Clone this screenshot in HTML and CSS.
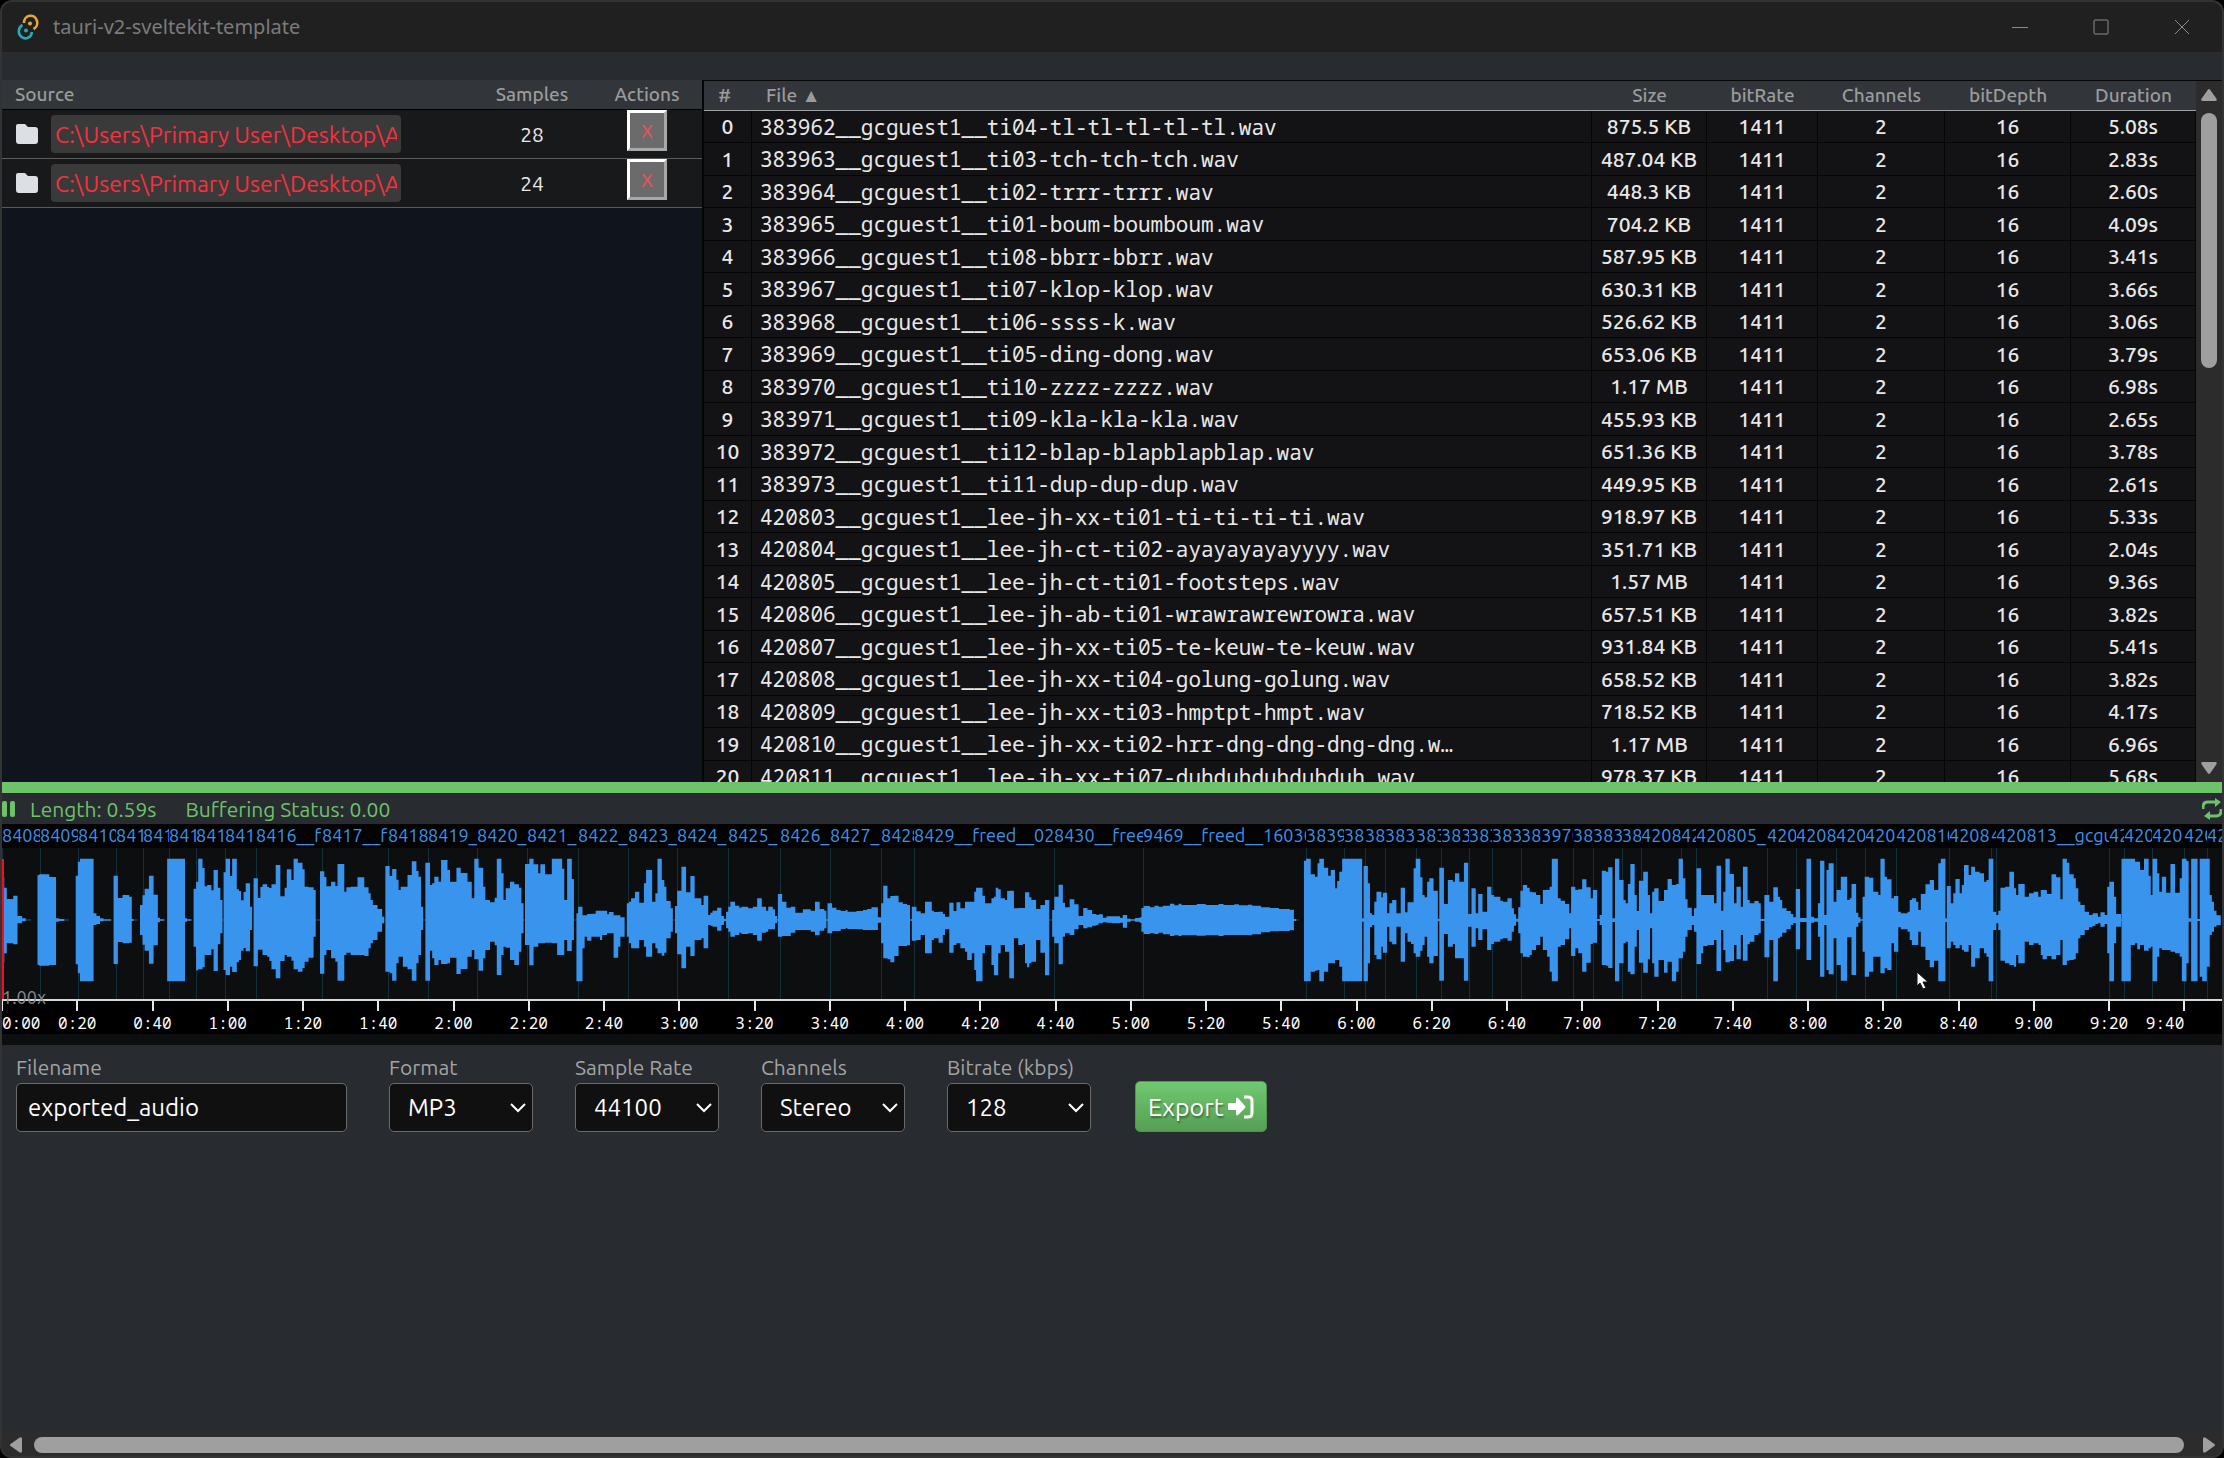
FILE: index.html
```html
<!DOCTYPE html>
<html lang="en">
<head>
<meta charset="utf-8">
<title>tauri-v2-sveltekit-template</title>
<link rel="stylesheet" href="styles.css">
</head>
<body>
<div class="window">
  <header class="titlebar">
    <svg class="logo" viewBox="0 0 24 26" aria-hidden="true">
      <g fill="none" stroke-width="2.6">
        <path d="M8 9A6.6 7 0 1 1 17.5 15" stroke="#e8a92f"/>
        <path d="M6.500 11A6.600 7 0 1 0 16 18" stroke="#25a9b5"/>
      </g>
      <circle cx="14" cy="9.500" r="2" fill="#e8a92f"/>
      <circle cx="10" cy="16.500" r="2" fill="#25a9b5"/>
    </svg>
    <h1 class="title">tauri-v2-sveltekit-template</h1>
    <div class="controls">
      <button class="control" aria-label="Minimize"><svg viewBox="0 0 16 20"><path d="M0 10.5H16"/></svg></button>
      <button class="control" aria-label="Maximize"><svg viewBox="0 0 16 20"><rect x="1" y="3" width="14" height="14" rx="1"/></svg></button>
      <button class="control" aria-label="Close"><svg viewBox="0 0 16 20"><path d="M1 3l14 14M15 3L1 17"/></svg></button>
    </div>
  </header>

  <main class="content">
    <section class="panes">
      <div class="sources">
        <table class="source-table">
          <thead><tr><th class="col-source">Source</th><th class="col-samples">Samples</th><th class="col-actions">Actions</th></tr></thead>
          <tbody>
            <tr>
              <td><div class="source"><svg class="folder" viewBox="0 0 22 20" aria-hidden="true"><path d="M2 0h7l3 3h7q3 0 3 3v11q0 3-3 3H3q-3 0-3-3V2q0-2 2-2z"/></svg><input class="path" aria-label="Source folder 1" value="C:\Users\Primary User\Desktop\A"></div></td>
              <td>28</td><td class="cell-remove"><button class="remove">X</button></td>
            </tr>
            <tr>
              <td><div class="source"><svg class="folder" viewBox="0 0 22 20" aria-hidden="true"><path d="M2 0h7l3 3h7q3 0 3 3v11q0 3-3 3H3q-3 0-3-3V2q0-2 2-2z"/></svg><input class="path" aria-label="Source folder 2" value="C:\Users\Primary User\Desktop\A"></div></td>
              <td>24</td><td class="cell-remove"><button class="remove">X</button></td>
            </tr>
          </tbody>
        </table>
      </div>
      <div class="files">
        <div class="file-scroll">
          <table class="file-table">
            <colgroup><col class="w-index"><col><col class="w-size"><col class="w-rate"><col class="w-channels"><col class="w-depth"><col class="w-duration"></colgroup>
            <thead><tr><th class="index-head">#</th><th class="name-head">File ▲</th><th>Size</th><th>bitRate</th><th>Channels</th><th>bitDepth</th><th>Duration</th></tr></thead>
            <tbody id="files"></tbody>
          </table>
        </div>
        <div class="vbar" aria-hidden="true">
          <svg class="varrow" viewBox="0 0 16 12"><path d="M8 0q1 0 2 2l5 7q2 3-1 3H2q-3 0-1-3l5-7q1-2 2-2z"/></svg>
          <div class="vtrack"><div class="vthumb"></div></div>
          <svg class="varrow" viewBox="0 0 16 12"><path d="M8 12q1 0 2-2l5-7q2-3-1-3H2q-3 0-1 3l5 7q1 2 2 2z"/></svg>
        </div>
      </div>
    </section>

    <div class="progress"></div>

    <section class="status">
      <button class="icon-button" aria-label="Pause"><svg width="14" height="16" viewBox="0 0 14 16"><rect width="5" height="16" rx="2"/><rect x="8" width="5" height="16" rx="2"/></svg></button>
      <span>Length: 0.59s</span>
      <span class="buffer">Buffering Status: 0.00</span>
      <button class="icon-button repeat" aria-label="Repeat"><svg width="20" height="22" viewBox="0 0 20 22"><path d="M1 11V9q0-5 5-5h8M19 11v2q0 5-5 5H6" fill="none" stroke="#6cc36a" stroke-width="3"/><path d="M13 0l6 4-6 5zM8 13v9l-6-4z"/></svg></button>
    </section>

    <section class="timeline">
      <div class="clips" id="clips"></div>
      <div class="wave-area">
        <svg class="wave" id="wave" viewBox="0 0 2220 151" preserveAspectRatio="none" role="img" aria-label="Waveform"></svg>
        <span class="zoom">1.00x</span>
        <svg class="pointer" width="14" height="20" viewBox="0 0 14 20" aria-hidden="true"><path d="M1 1v14l3-3 3 6 3-1-3-6h5z" fill="#fff" stroke="#111"/></svg>
      </div>
      <div class="axis" id="axis"></div>
    </section>

    <form class="export">
      <div class="field"><label for="filename">Filename</label><input class="box" id="filename" value="exported_audio"></div>
      <div class="field"><label for="format">Format</label><div class="select"><select class="box" id="format"><option>MP3</option></select><svg viewBox="0 0 16 10"><path d="M1 1l7 7 7-7"/></svg></div></div>
      <div class="field"><label for="rate">Sample Rate</label><div class="select"><select class="box" id="rate"><option>44100</option></select><svg viewBox="0 0 16 10"><path d="M1 1l7 7 7-7"/></svg></div></div>
      <div class="field"><label for="channels">Channels</label><div class="select"><select class="box" id="channels"><option>Stereo</option></select><svg viewBox="0 0 16 10"><path d="M1 1l7 7 7-7"/></svg></div></div>
      <div class="field"><label for="bitrate">Bitrate (kbps)</label><div class="select"><select class="box" id="bitrate"><option>128</option></select><svg viewBox="0 0 16 10"><path d="M1 1l7 7 7-7"/></svg></div></div>
      <button class="export-button" type="button">Export
        <svg width="27" height="24" viewBox="0 0 27 24" aria-hidden="true"><path d="M1 9q0-1 1-1h7V4q0-2 2-1l7 8q1 1 0 2l-7 7q-2 1-2-1v-4H2q-1 0-1-1z"/><path d="M17 2h4q4 0 4 4v12q0 4-4 4h-4" fill="none" stroke="#fff" stroke-width="3"/></svg>
      </button>
    </form>
  </main>

  <div class="hbar" aria-hidden="true">
    <svg class="harrow" viewBox="0 0 12 16"><path d="M0 8q0-1 2-2l7-5q3-2 3 1v12q0 3-3 1l-7-5q-2-1-2-2z"/></svg>
    <div class="hthumb"></div>
    <svg class="harrow" viewBox="0 0 12 16"><path d="M12 8q0-1-2-2L3 1Q0-1 0 2v12q0 3 3 1l7-5q2-1 2-2z"/></svg>
  </div>
</div>
<script src="script.js"></script>
</body>
</html>
```

FILE: styles.css
```css
* { box-sizing: border-box; }

body {
  margin: 0;
  height: 100vh;
  overflow: hidden;
  background: #000;
  color: #e8e8e8;
  font: 21px/24px "Ubuntu", "Noto Sans", sans-serif;
}

button, input, select { font: inherit; color: inherit; margin: 0; }
button { cursor: pointer; }

.window {
  height: 100vh;
  display: flex;
  flex-direction: column;
  border: 2px solid #333;
  border-radius: 12px;
  overflow: hidden;
  background: #282b30;
}

.titlebar {
  display: flex;
  align-items: center;
  height: 50px;
  padding: 0 0 0 14px;
  gap: 13px;
  background: #202020;
  color: #7b7b7b;
}
.logo { width: 24px; height: 26px; }
.title { margin: 0; flex: 1; font: 400 20px/24px "Noto Sans", sans-serif; }
.controls { display: flex; }
.control { width: 81px; height: 50px; padding: 0; border: 0; background: none; }
.control svg { width: 16px; height: 20px; display: block; margin: auto; fill: none; stroke: #8a8a8a; }

.content { flex: 1; min-height: 0; display: flex; flex-direction: column; padding-top: 28px; }

.panes { flex: 702 0 0; min-height: 0; display: flex; gap: 2px; background: #050506; }

.sources { flex: 700 0 0; min-width: 0; overflow: hidden; background: #10141c; }
table { width: 100%; border-collapse: separate; border-spacing: 0; table-layout: fixed; }
th, td { padding: 0; text-align: center; }
th { height: 30px; padding-bottom: 2px; background: #323539; color: #9b9b9b; font-size: 19px; line-height: 26px; font-weight: 500; }
.source-table th { border-bottom: 1px solid #000; }
.source-table td { height: 49px; border-bottom: 1px solid #5a5a5a; background: #18191b; }
.source-table .col-source { text-align: left; padding-left: 13px; }
.col-samples { width: 120px; }
.col-actions { width: 110px; }
.source { display: flex; align-items: center; gap: 13px; padding-left: 14px; }
.folder { width: 22px; height: 20px; fill: #dcdfe4; }
.path {
  width: 350px;
  height: 38px;
  padding: 0 4px;
  border: 0;
  border-radius: 4px;
  background: #3a3a3a;
  color: #fb2f3d;
  font-size: 23px;
}
.source-table .cell-remove { vertical-align: top; }
.remove {
  display: block;
  width: 40px;
  height: 41px;
  margin: 0 auto;
  padding: 0;
  border: 3px solid;
  border-color: #fff #a8a8a8 #a8a8a8 #fff;
  background: #6b6b6b;
  color: #f0525a;
  font-size: 19px;
}

.files { flex: 1518 0 0; min-width: 0; display: flex; padding-top: 1px; }
.file-scroll { flex: 1; overflow: hidden; }
.file-table th { border-bottom: 1px solid #a0a0a0; }
.file-table td {
  height: 32px;
  line-height: 31px;
  font-weight: 500;
  background: #131315;
  border-bottom: 1px solid #050506;
  border-right: 1px solid #050506;
}
.file-table tr:nth-child(even) td { height: 33px; }
.file-table .name { text-align: left; padding-left: 8px; font: 400 21px/30px "Noto Sans Mono", "DejaVu Sans Mono", monospace; overflow: hidden; white-space: nowrap; }
.file-table .name-head { text-align: left; padding-left: 14px; }
.file-table .index-head { padding-right: 7px; }
.w-index { width: 48px; }
.w-size { width: 115px; }
.w-rate { width: 111px; }
.w-channels { width: 127px; }
.w-depth { width: 126px; }
.w-duration { width: 125px; }

.vbar { width: 26px; padding: 8px 5px; display: flex; flex-direction: column; gap: 12px; background: #2c2c2c; }
.varrow { width: 16px; height: 12px; fill: #9f9f9f; flex: none; }
.vtrack { flex: 1; }
.vthumb { height: 40%; border-radius: 8px; background: #9f9f9f; }

.progress { height: 11px; background: #6cc36a; }

.status { display: flex; align-items: center; height: 31px; color: #6cc36a; }
.icon-button { padding: 0; border: 0; background: none; fill: #6cc36a; display: flex; margin-right: 14px; }
.buffer { margin-left: 29px; }
.repeat { margin: 0 0 0 auto; }

.timeline { background: #0c0e10; padding-bottom: 11px; }
.clips { display: flex; height: 24px; background: #030303; color: #3994ee; font-size: 18px; line-height: 22px; }
.clip { min-width: 0; overflow: hidden; white-space: nowrap; }
.wave-area { position: relative; height: 151px; }
.wave { display: block; width: 100%; height: 151px; }
.zoom { position: absolute; left: 0; bottom: -8px; z-index: 1; color: #8b8b8b; font-size: 18px; line-height: 20px; }
.pointer { position: absolute; left: 86.2%; top: 123px; }
.axis { display: flex; height: 35px; background: #000; border-top: 2px solid #d8d8d8; color: #fff; font: 16px/20px "Noto Sans Mono", "DejaVu Sans Mono", monospace; }
.tick { flex: 20 0 0; min-width: 0; }
.tick::before { content: ""; display: block; width: 2px; height: 10px; margin-left: -1px; background: #e8e8e8; }
.tick span { display: inline-block; transform: translateX(-50%); margin-top: 2px; }
.tick:first-child span { transform: none; }
.tick:last-child { flex-grow: 10; }
.tick:last-child span { transform: translateX(-100%); }

.export { flex: 367 0 0; display: flex; align-items: flex-start; gap: 42px; padding: 10px 14px; }
.field { display: flex; flex-direction: column; gap: 4px; width: 144px; }
.field:first-child { width: 331px; }
.field label { color: #a3a3a3; white-space: nowrap; }
.box {
  width: 100%;
  height: 49px;
  padding: 0 11px;
  border: 1px solid #6b6b6b;
  border-radius: 5px;
  background: #101010;
  color: #fff;
  font-size: 24px;
}
.select { display: grid; align-items: center; }
.select > * { grid-area: 1 / 1; }
.select .box { appearance: none; padding-left: 18px; }
.select svg { justify-self: end; width: 16px; height: 10px; margin-right: 7px; fill: none; stroke: #fff; stroke-width: 2; pointer-events: none; }
.export-button {
  display: flex;
  align-items: center;
  gap: 4px;
  height: 51px;
  margin: 26px 0 0 2px;
  padding: 0 12px;
  border: 1px solid #4f9550;
  border-radius: 5px;
  background: linear-gradient(#72c970, #559f54);
  color: #fff;
  font-size: 25px;
  text-shadow: 1px 2px 2px #0006;
}
.export-button svg { fill: #fff; }

.hbar { display: flex; align-items: center; height: 24px; padding: 2px 7px 0 8px; gap: 12px; background: #2c2c2c; }
.harrow { width: 12px; height: 16px; fill: #9f9f9f; flex: none; }
.hthumb { flex: 1; height: 16px; margin-right: 7px; border-radius: 8px; background: #9f9f9f; }
```

FILE: script.js
```js
const files = `383962__gcguest1__ti04-tl-tl-tl-tl-tl.wav|875.5 KB|5.08s
383963__gcguest1__ti03-tch-tch-tch.wav|487.04 KB|2.83s
383964__gcguest1__ti02-trrr-trrr.wav|448.3 KB|2.60s
383965__gcguest1__ti01-boum-boumboum.wav|704.2 KB|4.09s
383966__gcguest1__ti08-bbrr-bbrr.wav|587.95 KB|3.41s
383967__gcguest1__ti07-klop-klop.wav|630.31 KB|3.66s
383968__gcguest1__ti06-ssss-k.wav|526.62 KB|3.06s
383969__gcguest1__ti05-ding-dong.wav|653.06 KB|3.79s
383970__gcguest1__ti10-zzzz-zzzz.wav|1.17 MB|6.98s
383971__gcguest1__ti09-kla-kla-kla.wav|455.93 KB|2.65s
383972__gcguest1__ti12-blap-blapblapblap.wav|651.36 KB|3.78s
383973__gcguest1__ti11-dup-dup-dup.wav|449.95 KB|2.61s
420803__gcguest1__lee-jh-xx-ti01-ti-ti-ti-ti.wav|918.97 KB|5.33s
420804__gcguest1__lee-jh-ct-ti02-ayayayayayyyy.wav|351.71 KB|2.04s
420805__gcguest1__lee-jh-ct-ti01-footsteps.wav|1.57 MB|9.36s
420806__gcguest1__lee-jh-ab-ti01-wrawrawrewrowra.wav|657.51 KB|3.82s
420807__gcguest1__lee-jh-xx-ti05-te-keuw-te-keuw.wav|931.84 KB|5.41s
420808__gcguest1__lee-jh-xx-ti04-golung-golung.wav|658.52 KB|3.82s
420809__gcguest1__lee-jh-xx-ti03-hmptpt-hmpt.wav|718.52 KB|4.17s
420810__gcguest1__lee-jh-xx-ti02-hrr-dng-dng-dng-dng.w…|1.17 MB|6.96s
420811__gcguest1__lee-jh-xx-ti07-duhduhduhduhduh.wav|978.37 KB|5.68s`;

document.getElementById("files").innerHTML = files.split("\n").map((line, i) => {
  const [name, size, duration] = line.split("|");
  return `<tr><td>${i}</td><td class="name">${name}</td><td>${size}</td><td>1411</td><td>2</td><td>16</td><td>${duration}</td></tr>`;
}).join("");

// Clip start positions on the 2220-unit timeline, with the label of each clip.
const clips = [
  [0, "8408"], [38, "8409"], [76, "8410"], [114, "8411"], [141, "8412"], [167, "8413"], [194, "8414"], [223, "8415"],
  [254, "8416__fr"], [320, "8417__fr"], [386, "8418"], [426, "8419_"], [475, "8420_"], [525, "8421_"], [576, "8422_"],
  [626, "8423_"], [675, "8424_"], [726, "8425_"], [778, "8426_"], [828, "8427_"], [879, "8428"], [912, "8429__freed__020"],
  [1052, "8430__free"], [1141, "9469__freed__16030"], [1304, "3839"], [1342, "38"], [1363, "38"], [1383, "383"],
  [1414, "383"], [1439, "383"], [1467, "383"], [1490, "383"], [1519, "383970"], [1571, "38"], [1591, "383"],
  [1620, "38"], [1639, "4208"], [1679, "42"], [1694, "420805_"], [1765, "420"], [1794, "4208"], [1834, "420"],
  [1863, "420"], [1894, "420810"], [1947, "42081"], [1989, "4"], [1994, "420813__gcgu"], [2107, "42"], [2122, "420"],
  [2150, "420"], [2182, "420"], [2205, "42"]
];
document.getElementById("clips").innerHTML = clips.map(([start, name], i) => {
  const end = i + 1 < clips.length ? clips[i + 1][0] : 2220;
  return `<span class="clip" style="flex:${end - start} 0 0">${name}</span>`;
}).join("");

// Peaks as "position:up,down"; each level holds until the next position.
const peaks = [
  [0, `6:130,130 12:97,100 19:63,70 37:73,73 49:12,10 62:5,4 72:1,1 87:0,0 105:135,135 110:137,137 138:129,135 157:5,5 166:3,3 180:1,1 193:0,0
  212:133,133 218:175,160 224:184,184 262:20,15 270:12,12 280:5,4 290:2,2 311:0,0 318:133,132 330:66,66 343:75,70 362:70,68 369:3,3 374:1,1 385:0,0
  392:45,45 399:74,74 405:94,92 417:133,131 430:76,76 442:7,7 448:2,2 460:0,0 468:184,184 518:5,5 524:2,2 536:0,0
  542:94,80 549:115,151 555:184,148 567:156,142 573:101,105 580:105,105 592:89,88 598:150,153 610:97,73 617:60,40 623:1,1
  626:143,150 632:184,165 644:132,140 650:184,156 663:92,127 669:87,120 675:59,92 682:84,84 688:110,94 700:40,30 706:0,0
  710:125,139 722:66,89 729:99,89 735:107,105 748:99,110 754:96,123 760:107,148 772:165,175 785:71,123 797:97,105 803:152,110 816:120,122 822:184,148 834:172,155 847:152,144 853:100,125 864:98,113 878:90,50 884:1,1
  896:146,161 908:129,105 914:101,90 927:115,115 939:102,125 945:168,182 964:85,105 970:98,98 982:100,105 1001:128,105 1020:98,108 1032:80,85 1038:60,70 1044:45,60 1057:33,35 1070:10,10 1076:0,0
  1079:162,155 1091:132,160 1098:153,182 1110:121,130 1116:90,110 1122:100,110 1128:100,140 1141:135,148 1153:176,182 1166:147,130 1172:130,105 1179:40,30 1185:1,1
  1191:172,182 1204:105,92 1210:110,115 1216:130,135 1228:115,120 1235:180,132 1253:150,130 1260:115,113 1278:157,162 1290:141,147 1309:115,110 1321:65,90 1328:184,118 1340:157,152 1353:100,115 1359:60,90 1372:53,65 1385:67,76 1391:184,165 1404:140,105 1410:60,80 1416:95,83 1428:115,120 1440:107,135 1453:97,95 1460:50,40 1466:1,1
  1470:168,75 1482:184,136 1494:167,80 1507:140,70 1513:167,70 1526:137,68 1545:184,70 1560:184,105 1568:184,105`],
  [560, `0:184,105 6:154,105 12:60,60 20:184,93 33:123,60 39:1,1 46:20,184 51:40,184 63:14,85 69:14,50 76:18,62 88:19,50 100:28,50 112:28,60 118:28,45 132:17,40 137:24,40 150:14,113 163:14,80 169:8,50 181:0,0
  187:50,50 193:55,70 199:65,85 210:85,85 222:52,60 235:110,80 241:150,110 258:55,70 267:80,85 273:184,100 285:120,107 292:100,98 298:57,55 310:35,35 316:1,1
  322:42,40 328:88,103 340:160,145 353:83,80 365:132,108 377:65,60 396:45,55 402:73,85 415:15,15 421:22,17 427:28,20 440:37,32 452:12,15 459:4,4
  465:25,25 471:40,35 477:55,50 490:43,45 502:37,38 508:40,42 527:35,40 540:40,45 552:65,62 565:40,38 577:28,35 583:40,28 596:32,28 602:12,10 608:2,2
  610:78,50 622:55,48 634:37,48 646:40,38 659:22,30 680:32,30 702:28,35 714:55,46 727:33,32 740:28,25 746:2,2 749:50,40 762:37,33 774:30,33 786:27,27 800:30,25 805:25,27 830:27,28 848:30,30 860:33,30 872:38,30 890:8,8 899:50,70
  905:103,115 917:65,118 925:72,127 936:73,108 948:53,78 960:48,78 972:45,76 980:2,2 985:40,62 998:26,60 1010:20,45 1022:55,100 1041:28,60 1047:24,55 1060:25,68 1072:18,45 1078:10,28 1090:52,98 1102:27,75 1110:53,70 1121:35,85 1134:55,95 1140:55,120 1153:55,100 1160:85,150 1165:97,184 1183:73,100 1190:50,75 1208:65,135 1215:70,166 1220:97,166 1227:92,100 1234:65,75 1246:60,95 1252:87,95 1258:88,175 1271:35,55 1283:36,75 1296:36,72 1302:83,130 1308:83,142 1314:68,130 1320:60,125 1333:33,60 1345:45,98 1358:60,166 1370:1,1
  1378:30,50 1384:70,70 1396:106,133 1408:52,50 1414:38,40 1427:62,45 1440:47,28 1452:12,15 1465:36,25 1477:30,22 1490:18,17 1502:15,15 1508:17,10 1520:7,7 1530:11,8 1545:11,10 1568:11,10`],
  [1120, `0:7,8 8:15,23 20:4,5 30:2,2 42:6,5 55:8,8 60:36,35 66:42,42 84:38,40 96:43,42 108:40,38 120:43,43 140:49,48 152:44,46 164:49,48 172:45,46 215:48,47 240:45,46 276:48,48 290:45,45 320:47,45 333:44,45 358:46,46 370:43,43 395:38,37 420:36,34 445:33,33 475:31,31 487:3,3 493:1,1 500:0,0
  515:178,184 521:184,184 534:137,155 546:130,152 553:170,150 558:184,184 571:157,155 583:133,130 590:150,130 602:95,120 608:117,120 614:145,140 622:184,184 678:5,5 682:162,184 694:110,130 700:20,22 706:15,15 712:55,105 718:85,118 732:68,80 736:82,98 748:20,20 754:50,65 762:60,73 774:20,20 786:97,125 798:23,40 805:53,65 815:53,72 822:155,100 828:184,110 841:128,92 847:75,75 853:68,50 860:115,110 866:125,130 878:88,108 890:4,4
  894:157,182 907:48,42 918:120,80 932:115,72 938:140,115 950:115,115 963:172,182 975:18,20 984:95,80 996:20,25 1003:78,60 1015:25,28 1028:100,90 1040:75,72 1047:70,65 1065:58,58 1072:55,55 1085:65,62 1097:35,35 1103:17,17 1109:4,5 1115:38,40 1121:88,100 1128:105,110 1140:97,112 1147:85,105 1153:83,90 1165:75,75 1177:48,50 1184:90,90 1196:90,110 1203:100,155 1209:184,184 1226:65,80 1234:58,75 1246:48,58 1258:20,25
  1263:100,108 1275:90,85 1283:92,100 1294:122,155 1306:98,128 1318:65,72 1324:90,68 1336:3,3 1343:15,15 1349:148,135 1361:145,137 1367:158,144 1379:5,6 1386:184,184 1398:120,130 1410:60,70 1416:50,65 1422:108,155 1429:168,163 1441:75,80 1447:27,30 1453:118,128 1465:145,158 1478:75,118 1484:20,25 1490:85,130 1496:95,170 1508:57,120 1523:57,120`],
  [1664, `0:90,158 10:123,125 22:105,184 34:108,155 41:184,115 53:125,95 60:62,50 66:37,30 78:12,15 84:35,35 91:155,132 104:75,100 110:75,78 122:75,75 140:50,60 147:163,153 160:28,30 166:85,90 172:184,127 184:138,123 196:50,75 203:100,118 215:40,45 221:160,122 234:60,73 240:50,65 253:57,45 265:50,40 271:3,3 281:75,112 295:55,60 306:98,184 319:70,55 325:60,50 331:35,38 343:27,28 355:18,15 362:8,10 369:93,88 381:6,6 399:184,120 412:10,8 420:5,5 431:50,50 437:178,170 449:15,15 455:150,150 461:170,163 475:55,55 483:90,135 495:130,182 513:60,52 520:65,52 525:108,165 538:22,20 544:8,8 550:2,2
  556:70,95 562:130,170 574:127,155 586:85,110 600:75,110 606:184,160 618:130,145 625:122,150 637:65,70 644:72,95 656:25,22 663:20,28 682:25,35 688:60,60 694:65,75 706:55,75 712:30,35 719:78,80 732:107,120 744:120,142 756:90,122 768:170,184 775:184,184 788:5,6 792:102,85 803:50,65 810:80,75 816:123,85 828:80,75 834:105,90 840:165,95 853:135,75 860:160,140 871:145,115 884:140,85 896:115,100 903:120,110 909:184,184 922:25,30 930:15,10 936:28,30 942:97,122 955:100,130 967:145,135 980:95,140 986:75,105 992:108,130 1010:70,65 1022:80,75 1035:85,70 1048:70,75 1055:90,105 1060:90,118 1072:78,108 1085:137,118 1098:128,105 1110:62,60 1116:184,135 1128:172,122 1135:137,120 1147:125,118 1153:95,100 1160:55,55 1166:45,45 1178:25,30 1190:15,22 1200:20,18 1208:20,12 1215:10,10 1222:23,20 1234:15,12 1241:100,100 1247:115,184 1260:70,70 1266:18,20 1280:2,2
  1281:184,184 1307:184,75 1319:175,70 1325:175,88 1333:150,75 1344:184,92 1357:133,85 1363:75,80 1368:184,184 1381:140,110 1387:85,85 1394:130,90 1406:82,90 1418:168,95 1431:82,100 1444:125,110 1450:184,184 1463:177,130 1469:5,5 1476:184,184 1494:3,3 1500:184,170 1507:184,184 1520:184,140 1528:75,45 1534:55,35 1540:28,20 1547:14,16 1559:0,0`]
];
const middle = 72;
const bars = [];
for (const [offset, text] of peaks) {
  for (const step of text.trim().split(/\s+/)) {
    const [x, levels] = step.split(":");
    const [up, down] = levels.split(",").map(Number);
    bars.push([offset + x / 2.8 - 2, up / 3, down / 3]);
  }
}
let outline = "";
for (let i = 0; i + 1 < bars.length; i++) {
  const [x, up, down] = bars[i];
  const next = bars[i + 1][0];
  if (up + down > 0) outline += `M${x} ${middle - up}H${next}V${middle + down}H${x}z`;
}
const lines = clips.map(([x]) => `M${x + 0.5} 0V151`).join("");
document.getElementById("wave").innerHTML =
  `<path d="${lines}" stroke="#12303a" stroke-width="1"/>` +
  `<path d="${outline}" fill="#3994ee"/>` +
  `<path d="M1 11V151" stroke="#f01020" stroke-width="2"/>`;

let ticks = "";
for (let seconds = 0; seconds <= 580; seconds += 20) {
  ticks += `<div class="tick"><span>${Math.floor(seconds / 60)}:${String(seconds % 60).padStart(2, "0")}</span></div>`;
}
document.getElementById("axis").innerHTML = ticks;
```
